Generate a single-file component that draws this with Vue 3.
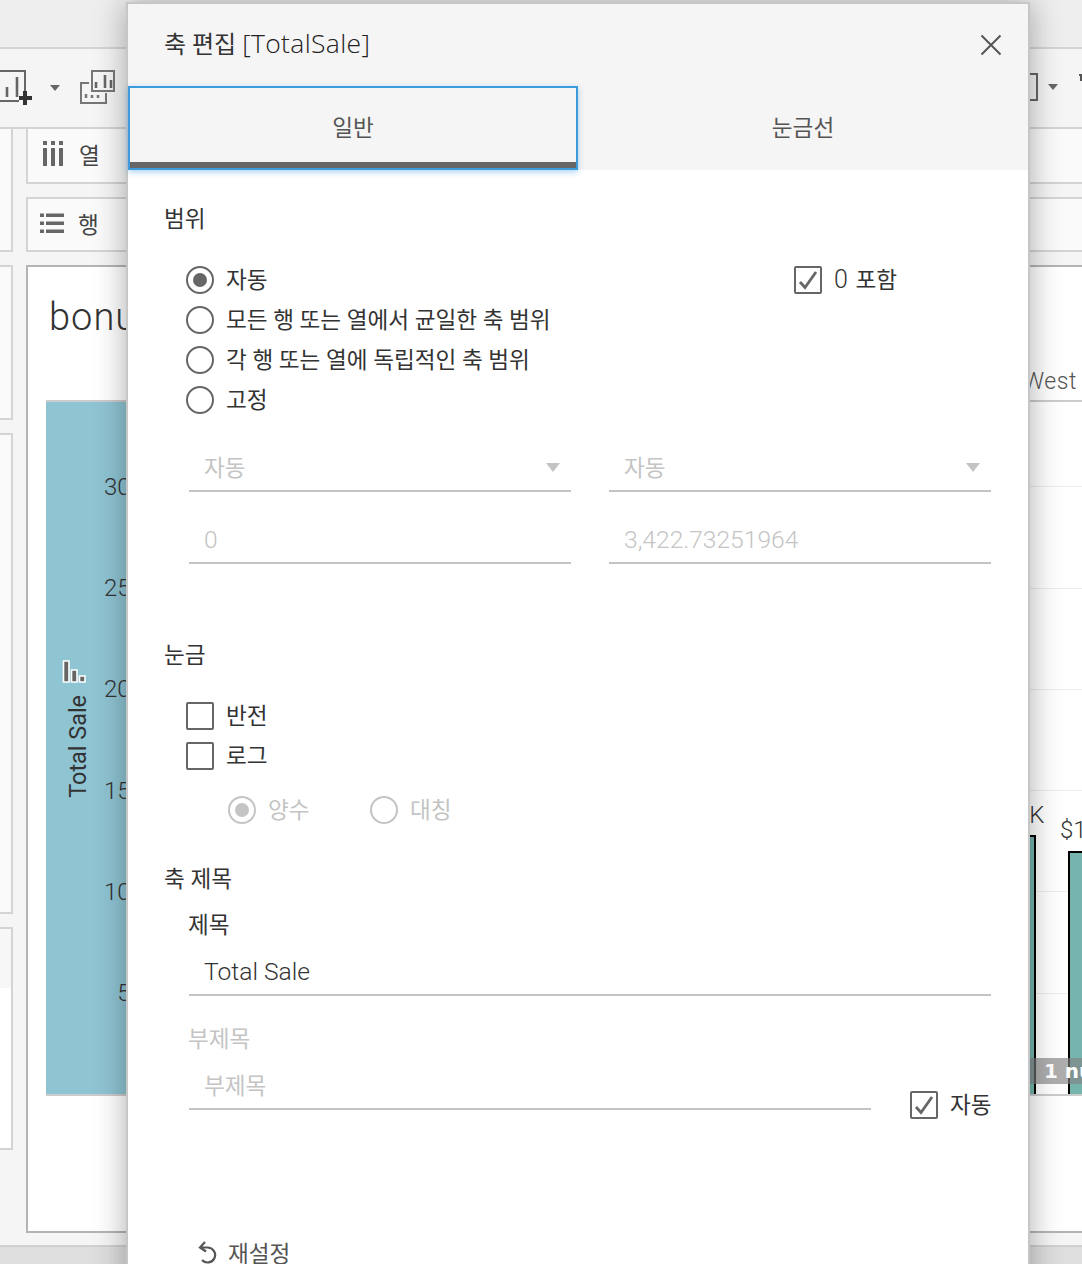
<script setup>
const ticks = ['300', '250', '200', '150', '100', '50']
const ranges = [
  { label: '자동', on: true },
  { label: '모든 행 또는 열에서 균일한 축 범위', on: false },
  { label: '각 행 또는 열에 독립적인 축 범위', on: false },
  { label: '고정', on: false },
]
const listRows = [0, 1, 2]
</script>

<template>
  <div class="page">
    <div class="topbar"></div>
    <div class="toolbar">
      <div class="tools">
        <svg class="tool-a" width="36" height="36" viewBox="0 0 36 36">
          <path d="M0 1H25V22M0 31H19" fill="none" stroke="#666" stroke-width="2" />
          <path d="M7 27V17M17 27V7" stroke="#666" stroke-width="2.6" />
          <path d="M19 26H23V21H27V26H32V30H27V35H23V30H19Z" fill="#333" />
        </svg>
        <span class="caret"></span>
        <svg class="tool-b" width="38" height="36" viewBox="0 0 38 36">
          <path d="M13 1H35V21H13Z" fill="none" stroke="#777" stroke-width="2" />
          <path d="M10 13H2V33H27V23" fill="none" stroke="#777" stroke-width="2" />
          <path d="M17 18V12M26 18V5M32 18V10" stroke="#666" stroke-width="2.6" />
          <path d="M7 28V24M13 28V25M19 28V25" stroke="#777" stroke-width="2.6" />
        </svg>
      </div>
      <div class="tools-right">
        <svg width="8" height="28" viewBox="0 0 8 28"><path d="M0 1H7V27H0" fill="none" stroke="#666" stroke-width="2" /></svg>
        <span class="caret"></span>
        <svg class="tool-end" width="3" height="28" viewBox="0 0 3 28"><path d="M0 2H3M2 2V8" stroke="#555" stroke-width="2" fill="none" /></svg>
      </div>
    </div>

    <div class="main">
      <div class="side">
        <div class="side-card side-a"></div>
        <div class="side-card side-b"></div>
        <div class="side-card side-c"></div>
        <div class="side-card side-d"></div>
      </div>
      <div class="work">
        <div class="pill">
          <svg width="22" height="26" viewBox="0 0 22 26">
            <path d="M1 0H5V4H1ZM9 0H13V4H9ZM17 0H21V4H17Z" fill="#666" />
            <path d="M1 7H5V25H1ZM9 7H13V25H9ZM17 7H21V25H17Z" fill="#666" />
          </svg>
          <span class="pill-text">열</span>
        </div>
        <div class="pill">
          <svg class="list-icon" width="24" height="20" viewBox="0 0 24 20">
            <g v-for="r in listRows" :key="r">
              <rect x="0" :y="r * 8 + 0.5" width="4" height="3.5" fill="#666" />
              <rect x="6" :y="r * 8 + 0.5" width="18" height="3.5" fill="#666" />
            </g>
          </svg>
          <span class="pill-text">행</span>
        </div>
        <div class="view">
          <div class="view-title">bonus</div>
          <div class="chart-head"><span>West</span></div>
          <div class="chart">
            <div class="axis">
              <div class="axis-title">
                <svg class="axis-icon" width="26" height="24" viewBox="0 0 26 24">
                  <path d="M2.5 1H8V22H2.5ZM10.5 10H16V22H10.5ZM18.500 16H24V22H18.500Z" fill="#666" stroke="#fff" stroke-width="1.6" />
                </svg>
                <span class="axis-name">Total Sale</span>
              </div>
              <div class="axis-ticks">
                <div v-for="t in ticks" :key="t" class="tick">{{ t }}</div>
              </div>
            </div>
            <div class="plot">
              <div class="bar bar-one"><span class="bar-label">$198K</span></div>
              <div class="bar bar-two"><span class="bar-label">$1.5K</span></div>
              <div class="band"><span>1 null</span></div>
            </div>
          </div>
        </div>
      </div>
    </div>
    <div class="status"></div>

    <div class="dialog">
      <header class="dlg-head">
        <span class="dlg-title">축 편집 <span class="latin">[TotalSale]</span></span>
        <svg width="24" height="24" viewBox="0 0 24 24"><path d="M2.500 2.500L21.500 21.500M21.500 2.500L2.500 21.500" stroke="#555" stroke-width="2" /></svg>
      </header>
      <div class="tabs">
        <div class="tab tab-on"><div class="tab-in">일반</div></div>
        <div class="tab"><div class="tab-in">눈금선</div></div>
      </div>
      <div class="body">
        <div class="sec">범위</div>
        <div class="range">
          <div class="range-list">
            <div v-for="r in ranges" :key="r.label" class="row">
              <span class="radio" :class="{ on: r.on }"></span><span class="t">{{ r.label }}</span>
            </div>
          </div>
          <div class="row">
            <span class="check">
              <svg width="24" height="24" viewBox="0 0 24 24"><path d="M4 14L9 19.500L20 4" fill="none" stroke="#666" stroke-width="2.800" /></svg>
            </span><span class="t include"><span class="zero">0</span> 포함</span>
          </div>
        </div>
        <div class="fields">
          <div class="field off"><span class="t">자동</span><span class="tri"></span></div>
          <div class="field off"><span class="t">자동</span><span class="tri"></span></div>
          <div class="field off num">0</div>
          <div class="field off num">3,422.73251964</div>
        </div>
        <div class="sec sec-tick">눈금</div>
        <div class="checks">
          <div class="row"><span class="check"></span><span class="t">반전</span></div>
          <div class="row"><span class="check"></span><span class="t">로그</span></div>
        </div>
        <div class="log-opts">
          <div class="row opt off"><span class="radio on off-radio"></span><span class="t">양수</span></div>
          <div class="row opt off"><span class="radio off-radio"></span><span class="t">대칭</span></div>
        </div>
        <div class="sec sec-title">축 제목</div>
        <div class="sub-label">제목</div>
        <div class="field full num">Total Sale</div>
        <div class="sub-label off second">부제목</div>
        <div class="sub-row">
          <div class="field off sub-field"><span class="t">부제목</span></div>
          <div class="row auto">
            <span class="check">
              <svg width="24" height="24" viewBox="0 0 24 24"><path d="M4 14L9 19.500L20 4" fill="none" stroke="#666" stroke-width="2.800" /></svg>
            </span><span class="t">자동</span>
          </div>
        </div>
        <div class="reset">
          <svg width="20" height="24" viewBox="0 0 20 24"><path d="M5 7.500H10.500A7.500 7.500 0 1 1 5 20M8 2L3 7.500L9 11.500" fill="none" stroke="#555" stroke-width="2.200" /></svg>
          <span>재설정</span>
        </div>
      </div>
    </div>
  </div>
</template>

<style>
html, body { margin: 0; }
</style>

<style scoped>
.page {
  position: relative;
  width: 1082px;
  height: 1264px;
  overflow: hidden;
  display: flex;
  flex-direction: column;
  background: #f5f5f5;
  font-family: Roboto, "Noto Sans CJK KR", sans-serif;
  font-size: 22.6px;
  font-weight: 400;
  color: #333;
}
.topbar { height: 47px; flex: none; background: #efeeee; border-bottom: 2px solid #d4d4d4; }
.toolbar {
  height: 80px; flex: none; box-sizing: border-box; display: flex; align-items: flex-start; justify-content: space-between;
  border-bottom: 2px solid #d4d4d4; padding-top: 21px;
}
.tools { display: flex; align-items: center; }
.tools .caret { margin: 0 19px 0 14px; }
.tools-right { display: flex; align-items: center; gap: 10px; padding-top: 3px; }
.tool-end { margin-left: 11px; }
.caret { display: block; width: 0; height: 0; border: 5.500px solid transparent; border-top: 6px solid #666; border-bottom: 0; }
.main { flex: 1; min-height: 0; display: flex; gap: 13px; }
.side { width: 13px; flex: none; display: flex; flex-direction: column; gap: 13px; }
.side-card { border: 2px solid #d4d4d4; border-left: 0; background: #fafafa; box-sizing: border-box; }
.side-a { height: 123px; border-top: 0; }
.side-b { height: 155px; }
.side-c { height: 481px; }
.side-d { height: 223px; background: linear-gradient(#f7f7f7 0 59px, #fff 59px); }
.work { width: 1120px; flex: none; display: flex; flex-direction: column; gap: 13px; padding-bottom: 12px; box-sizing: border-box; }
.pill {
  height: 55px; flex: none; box-sizing: border-box; display: flex; align-items: center; gap: 15px;
  padding: 0 0 3px 14px; border: 2px solid #d4d4d4; border-top-width: 0; background: #fafafa;
}
.pill + .pill { border-top-width: 2px; }
.list-icon { margin-left: -2px; margin-right: -1px; }
.pill-text { color: #444; }
.view { flex: 1; min-height: 0; box-sizing: border-box; border: 2px solid #b4b4b4; background: #fff; display: flex; flex-direction: column; padding-left: 18px; }
.view-title { height: 100px; flex: none; font-size: 38px; font-weight: 300; letter-spacing: 1px; line-height: 100px; padding-left: 3px; box-sizing: border-box; color: #333; }
.chart-head { height: 35px; flex: none; box-sizing: border-box; border-bottom: 2px solid #ccc; display: flex; justify-content: flex-end; align-items: center; padding: 0 67px 5px 0; color: #555; font-size: 23px; font-weight: 300; letter-spacing: .6px; }
.chart { height: 692px; flex: none; display: flex; border-bottom: 2px solid #ccc; box-sizing: content-box; }
.axis { width: 95px; flex: none; display: flex; background: #8fc4d3; box-sizing: border-box; }
.axis-title { width: 58px; flex: none; position: relative; display: flex; align-items: center; justify-content: center; padding-left: 2px; box-sizing: border-box; }
.axis-name { writing-mode: vertical-rl; transform: rotate(180deg); font-size: 23.400px; line-height: 26px; margin-top: -4px; margin-left: 3px; }
.axis-icon { position: absolute; left: 15px; top: 258px; }
.axis-ticks { flex: 1; display: flex; flex-direction: column; justify-content: flex-end; padding: 0 2px 50px 0; }
.tick { height: 101.300px; flex: none; display: flex; align-items: center; justify-content: flex-end; font-size: 24px; font-weight: 300; }
.plot {
  flex: 1; position: relative; display: flex; align-items: flex-end; justify-content: flex-end; gap: 32px;
  background: repeating-linear-gradient(to top, transparent 0 100.300px, #eee 100.300px 101.300px);
  padding-right: 16px;
}
.bar { width: 60px; box-sizing: border-box; position: relative; background: #76b5ae; border: 2px solid #000; border-bottom: 0; }
.bar-one { height: 259px; }
.bar-two { height: 243px; }
.bar-label { position: absolute; bottom: 100%; left: -2px; white-space: nowrap; font-size: 24px; font-weight: 300; line-height: 30px; margin-bottom: 7px; }
.bar-two .bar-label { left: -10px; margin-bottom: 8px; }
.band {
  position: absolute; left: 0; right: 0; bottom: 10px; height: 26px; background: rgba(130, 130, 130, .65);
  display: flex; align-items: center; justify-content: flex-end; padding-right: 37px;
  color: #fff; font-weight: 700; font-size: 20px; font-family: "DejaVu Sans", sans-serif;
}
.status { height: 17px; flex: none; background: #dedede; border-top: 2px solid #d0d0d0; }

.dialog {
  position: absolute; left: 126px; top: 2px; width: 904px; height: 1300px; box-sizing: border-box;
  background: #fff; border: 2px solid #c6c6c6; box-shadow: 0 0 30px rgba(0, 0, 0, .32);
}
.dlg-head { height: 82px; background: #f5f5f5; display: flex; align-items: center; justify-content: space-between; padding: 0 25px 0 36px; box-sizing: border-box; }
.dlg-title { font-size: 24px; color: #333; line-height: 1; margin-top: -3px; }
.latin { font-family: "Open Sans", sans-serif; font-size: 26.500px; font-weight: 300; letter-spacing: .35px; color: #222; }
.tabs { height: 84px; background: #f5f5f5; display: flex; }
.tab { width: 450px; box-sizing: border-box; }
.tab-on { border: 2px solid #3d9bdc; box-shadow: 0 2px 6px rgba(61, 155, 220, .45); position: relative; }
.tab-in { height: 100%; box-sizing: border-box; display: flex; align-items: center; justify-content: center; color: #555; padding-bottom: 3px; }
.tab-on .tab-in { border-bottom: 6px solid #666; padding: 3px 0 0; }
.body { padding: 29px 37px 0 36px; }
.sec, .sub-label, .row { height: 40px; white-space: nowrap; }
.sec, .sub-label { line-height: 42px; }
.row { display: flex; align-items: center; }
.t { display: block; margin-top: -3px; }
.include { word-spacing: 2px; }
.zero { font-size: 25px; font-weight: 300; }
.range { display: flex; margin-top: 21px; padding-left: 22px; }
.range-list { width: 608px; flex: none; }
.radio { width: 28px; height: 28px; flex: none; box-sizing: border-box; border: 2px solid #666; border-radius: 50%; margin-right: 12px; display: flex; align-items: center; justify-content: center; }
.radio.on::after { content: ""; width: 14px; height: 14px; border-radius: 50%; background: #666; }
.check { width: 28px; height: 28px; flex: none; box-sizing: border-box; border: 2px solid #666; border-radius: 2px; margin-right: 12px; display: flex; align-items: center; justify-content: center; }
.fields { margin-top: 23px; padding-left: 25px; display: grid; grid-template-columns: 382px 382px; column-gap: 38px; row-gap: 23px; }
.field {
  position: relative; height: 49px; box-sizing: border-box; border-bottom: 2px solid #c4c4c4; padding-left: 15px;
  display: flex; align-items: center; color: #333;
}
.field .t { margin-top: 0; }
.num { font-size: 24.600px; font-weight: 300; padding-top: 1px; }
.off { color: #c4c4c4; }
.field.off { color: #c4c4c4; }
.tri { position: absolute; right: 11px; top: 20px; width: 0; height: 0; border: 7.500px solid transparent; border-top: 9px solid #c4c4c4; border-bottom: 0; }
.sec-tick { margin-top: 71px; }
.checks { margin-top: 21px; padding-left: 22px; }
.log-opts { margin-top: 14px; padding-left: 64px; display: flex; }
.opt { width: 142px; }
.off-radio { border-color: #c4c4c4; }
.off-radio.on::after { background: #c4c4c4; }
.sec-title { margin-top: 29px; }
.sub-label { margin-top: 6px; padding-left: 24px; }
.sub-label.second { margin-top: 23px; }
.full { margin: 2px 0 0 25px; width: 802px; }
.sub-row { display: flex; margin: 2px 0 0 25px; }
.sub-field { width: 682px; flex: none; }
.auto { margin: 24px 0 -15px 39px; }
.reset { margin: 122px 0 0 33px; height: 40px; display: flex; align-items: center; gap: 11px; color: #555; }
</style>
